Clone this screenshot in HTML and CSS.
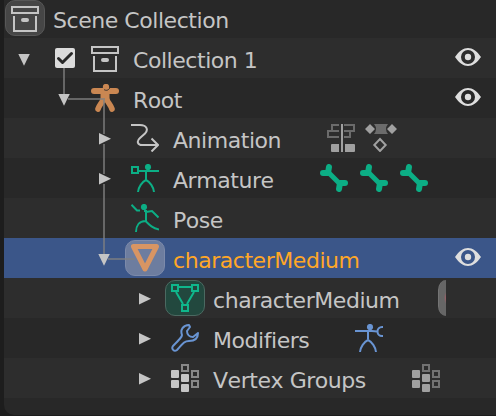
FILE: index.html
```html
<!DOCTYPE html>
<html lang="en">
<head>
<meta charset="utf-8">
<title>Outliner</title>
<link rel="stylesheet" href="styles.css">
</head>
<body>
<svg class="defs" aria-hidden="true">
  <symbol id="down" viewBox="0 0 28 28"><path d="M8.300 10h11.500L14 21.700z" fill="currentColor"/></symbol>
  <symbol id="right" viewBox="0 0 28 28"><path d="M9 9v11.400l12-5.700z" fill="currentColor"/></symbol>
  <symbol id="archive" viewBox="0 0 28 28"><path d="M1 3h26v6H1zM3 12v15h22V12" fill="none" stroke="currentColor" stroke-width="2"/><rect x="10" y="14" width="8" height="4" rx="2" fill="currentColor"/></symbol>
  <symbol id="person" viewBox="0 0 28 28"><g fill="none" stroke="currentColor" stroke-linecap="round"><path d="M3 7h22" stroke-width="6"/><path d="M12 16c-1.200 3-3.500 4.500-5 9M16 16c1.200 3 3.500 4.500 5 9" stroke-width="5.600"/></g><path d="M9.500 7h9v10h-9z" fill="currentColor"/><circle cx="15" cy="3" r="3.200" fill="currentColor"/><path d="M13 5.500c2 1.400 4.300 1 5.800-1.500" fill="none" stroke="#282828" stroke-width=".9"/></symbol>
  <symbol id="anim" viewBox="0 0 28 28"><path d="M0 1h9c7 0 8.500 5 5 8.500l-5 4.500c-4 3.500-2 7 2 7h15.500M20.500 14.500l6.500 6.500-6.500 6.500" fill="none" stroke="currentColor" stroke-width="2"/></symbol>
  <symbol id="armature" viewBox="0 0 28 28"><path d="M1 3h6v6H1zM8 7h20M15 7v9M7 28c.5-5 4-10 8-12 4 2 7.500 7 8 12" fill="none" stroke="currentColor" stroke-width="2"/><circle cx="17" cy="3" r="3.100" fill="currentColor"/></symbol>
  <symbol id="pose" viewBox="0 0 28 28"><path d="M.5.8L6 6.500h3M13 7h2v10M15 8l6-1 6.500 6.500M5 28c0-6 3-11 9.500-11 4.500 4.500 7 7 13.500 8.500" fill="none" stroke="currentColor" stroke-width="2"/><circle cx="13" cy="3" r="3.100" fill="currentColor"/></symbol>
  <symbol id="mesh" viewBox="0 0 28 28"><path d="M2.500 2.500h23L14 25z" fill="none" stroke="currentColor" stroke-width="5" stroke-linejoin="round"/></symbol>
  <symbol id="meshdata" viewBox="0 0 28 28"><path d="M1 1h6v6H1zM21 1h6v6h-6zM11 21h6v6h-6zM8 3h12M5 8l7 12M23 8l-7 12" fill="none" stroke="currentColor" stroke-width="2"/></symbol>
  <symbol id="wrench" viewBox="0 0 28 28"><path d="M18 1C12 1 9 6 11 11c0 2-2 4-9 11-2 3 1 6 4 4 7-8 8-9 12-9 6 0 9-3 9-8l-5 4c-3.500 0-6-2.500-6-6l3-4z" fill="none" stroke="currentColor" stroke-width="2" stroke-linejoin="round"/></symbol>
  <symbol id="groups" viewBox="0 0 28 28"><g fill="currentColor"><rect y="6" width="8" height="8" rx="1"/><rect y="16" width="8" height="8" rx="1"/><rect x="10" y="10" width="8" height="8" rx="1"/><rect x="10" y="20" width="8" height="8" rx="1"/></g><path d="M11 1h6v6h-6zM21 7h6v6h-6zM21 17h6v6h-6z" fill="none" stroke="currentColor" stroke-opacity=".6" stroke-width="2"/></symbol>
  <symbol id="nla" viewBox="0 0 28 28"><path d="M12 1H5v6h7M12 7H1v6h11M17 1h10v6H17M17 13h6V7" fill="none" stroke="#6b6b6b" stroke-width="2"/><path d="M14 0h2v28h-2zM5 20h7v8H5q-1 0-1-1v-6q0-1 1-1zM18 20h9q1 0 1 1v6q0 1-1 1h-9z" fill="currentColor"/></symbol>
  <symbol id="action" viewBox="0 0 32 28"><path d="M9 0h14q-4 5 0 10H9q4-5 0-10z" fill="#6b6b6b"/><path d="M5 0l5 5-5 5-5-5zM27 0l5 5-5 5-5-5z" fill="currentColor"/><path d="M15 15l5.700 6L15 27l-5.700-6z" fill="none" stroke="currentColor" stroke-width="2"/></symbol>
  <symbol id="bone" viewBox="0 0 28 28"><path d="M7 7l14 14" stroke="currentColor" stroke-width="5"/><path d="M3 9h5l1-6M25 19h-5l-1 6" fill="none" stroke="currentColor" stroke-width="6" stroke-linecap="round" stroke-linejoin="round"/></symbol>
  <symbol id="modifier" viewBox="0 0 28 28"><path d="M0 7h17l5 .5M13 7v8M5 28c.5-5 4-10 8-12 4 2 7.500 7 8 12M28 3h-1a4.500 4.500 0 000 9h1" fill="none" stroke="currentColor" stroke-width="2"/><circle cx="15" cy="3" r="3.100" fill="currentColor"/></symbol>
  <symbol id="eye" viewBox="0 0 26 18"><path fill-rule="evenodd" d="M0 9C4 3 8.500 0 13 0s9 3 13 9c-4 6-8.500 9-13 9S4 15 0 9zm13-7a7 7 0 100 14 7 7 0 000-14z" fill="currentColor"/><circle cx="13" cy="9" r="3.200" fill="currentColor"/></symbol>
</svg>
<main class="outliner">
  <div class="row"><span class="cell button"><svg class="icon"><use href="#archive"/></svg></span><span class="label">Scene Collection</span></div>
  <div class="row odd"><span class="cell arrow"><svg class="icon"><use href="#down"/></svg></span><span class="cell"><span class="check"><svg viewBox="0 0 20 20"><path d="M3.500 10.500l4 4 9-9" fill="none" stroke="#282828" stroke-width="3" stroke-linecap="round" stroke-linejoin="round"/></svg></span></span><span class="cell"><svg class="icon"><use href="#archive"/></svg></span><span class="label">Collection 1</span><svg class="eye"><use href="#eye"/></svg></div>
  <div class="row depth1"><span class="cell arrow"><svg class="icon"><use href="#down"/></svg></span><span class="cell orange"><svg class="icon"><use href="#person"/></svg></span><span class="label">Root</span><svg class="eye"><use href="#eye"/></svg></div>
  <div class="row odd depth2"><span class="cell arrow"><svg class="icon"><use href="#right"/></svg></span><span class="cell"><svg class="icon"><use href="#anim"/></svg></span><span class="label">Animation</span><span class="extras anim-extras"><svg class="icon"><use href="#nla"/></svg><svg class="icon wide"><use href="#action"/></svg></span></div>
  <div class="row depth2"><span class="cell arrow"><svg class="icon"><use href="#right"/></svg></span><span class="cell green"><svg class="icon"><use href="#armature"/></svg></span><span class="label">Armature</span><span class="extras bones green"><svg class="icon"><use href="#bone"/></svg><svg class="icon"><use href="#bone"/></svg><svg class="icon"><use href="#bone"/></svg></span></div>
  <div class="row odd depth2"><span class="cell"></span><span class="cell green"><svg class="icon"><use href="#pose"/></svg></span><span class="label">Pose</span></div>
  <div class="row selected depth2"><span class="cell arrow"><svg class="icon"><use href="#down"/></svg></span><span class="cell button mesh"><svg class="icon"><use href="#mesh"/></svg></span><span class="label">characterMedium</span><svg class="eye"><use href="#eye"/></svg></div>
  <div class="row odd depth3"><span class="cell arrow"><svg class="icon"><use href="#right"/></svg></span><span class="cell button data"><svg class="icon"><use href="#meshdata"/></svg></span><span class="label">characterMedium</span><span class="clipped"></span></div>
  <div class="row depth3"><span class="cell arrow"><svg class="icon"><use href="#right"/></svg></span><span class="cell blue"><svg class="icon"><use href="#wrench"/></svg></span><span class="label">Modifiers</span><span class="extras mods blue"><svg class="icon"><use href="#modifier"/></svg></span></div>
  <div class="row odd depth3"><span class="cell arrow"><svg class="icon"><use href="#right"/></svg></span><span class="cell"><svg class="icon"><use href="#groups"/></svg></span><span class="label">Vertex Groups</span><span class="extras vgroups"><svg class="icon"><use href="#groups"/></svg></span></div>
  <svg class="lines" viewBox="0 0 496 416"><path d="M64 68v26M68 99h36M104 98v36M104 144v30M104 184v70M108 259h27" fill="none" stroke="#808080" stroke-opacity=".7" stroke-width="2"/></svg>
</main>
</body>
</html>
```
FILE: styles.css
```css
* { box-sizing: border-box; }
body {
  margin: 0;
  height: 416px;
  overflow: hidden;
  background: #1d1d1d;
  color: #c5c5c5;
  font: 22px/40px "DejaVu Sans", sans-serif;
  font-kerning: none;
  font-variant-ligatures: none;
  letter-spacing: -0.45px;
}
svg { display: block; flex: none; }
.defs { position: absolute; width: 0; height: 0; }
.outliner {
  height: 415px;
  margin-left: 4px;
  overflow: hidden;
  background: #282828;
  border-radius: 0 0 0 10px;
}
.row {
  display: flex;
  align-items: center;
  height: 40px;
  padding-left: 1px;
  white-space: nowrap;
}
.row:first-child { margin-top: -2px; }
.odd { background: #2d2d2d; }
.selected { background: #3b5689; }
.depth1 { padding-left: 41px; }
.depth2 { padding-left: 81px; }
.depth3 { padding-left: 121px; }
.cell {
  display: flex;
  flex: none;
  align-items: center;
  justify-content: center;
  width: 40px;
  height: 36px;
}
.arrow { padding-right: 2px; }
.icon { width: 28px; height: 28px; }
.wide { width: 32px; }
.button {
  background: #464646;
  border: 1px solid #575757;
  border-radius: 10px;
}
.mesh { color: #d89563; background: #6d7d9f; border-color: #7c8aaa; }
.data { color: #0fb78c; background: #22483e; border-color: #4b6961; }
.label { margin: 6px 0 0 8px; }
.selected .label { color: #ffa727; }
.orange { color: #ca8752; }
.green { color: #0cae85; }
.blue { color: #6994d2; }
.check {
  width: 20px;
  height: 20px;
  background: #dcdcdc;
  border-radius: 2px;
}
.check svg { width: 20px; height: 20px; }
.eye {
  width: 26px;
  height: 18px;
  margin: 0 15px 2px auto;
  color: #dedede;
}
.extras { display: flex; margin-left: auto; }
.anim-extras { gap: 10px; margin-right: 99px; color: #a0a0a0; }
.bones { gap: 12px; margin-right: 68px; }
.mods { margin-right: 113px; }
.vgroups { margin-right: 56px; color: #a0a0a0; }
.clipped {
  width: 8px;
  height: 36px;
  margin: 0 50px 0 auto;
  background: radial-gradient(ellipse 2px 6px at right, #a06068, #666);
  border-left: 1px solid #747474;
  border-radius: 8px 0 0 8px / 10px 0 0 10px;
}
.lines {
  position: absolute;
  top: 0;
  left: 0;
  width: 496px;
  height: 416px;
  pointer-events: none;
}
```
